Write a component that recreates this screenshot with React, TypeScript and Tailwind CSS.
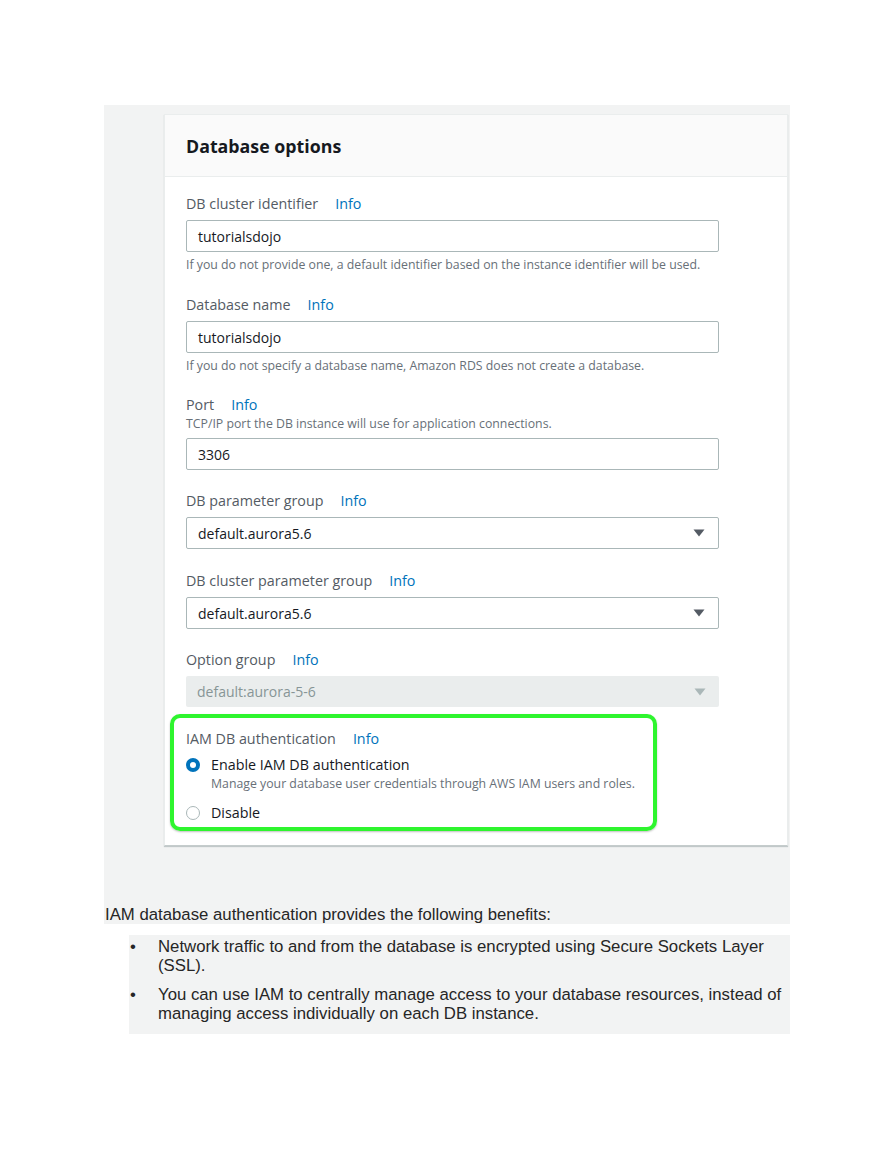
import React from 'react';

const font = { fontFamily: '"Open Sans", "Noto Sans", sans-serif' };
const docFont = { fontFamily: '"Liberation Sans", Arial, sans-serif' };

const Label: React.FC<{ text: string; className?: string }> = ({ text, className }) => (
  <div className={`flex items-center h-[20px] text-[14.3px] text-[#545b64] ${className ?? ''}`}>
    <span>{text}</span>
    <span className="ml-[17px] text-[#0073bb]">Info</span>
  </div>
);

const Hint: React.FC<{ text: string; className?: string }> = ({ text, className }) => (
  <div className={`h-[16px] leading-[16px] text-[12.3px] text-[#687078] ${className ?? ''}`}>{text}</div>
);

const Input: React.FC<{ value: string; className?: string }> = ({ value, className }) => (
  <div
    className={`w-[533px] h-[32px] border border-[#aab7b8] rounded-[2px] px-[11px] flex items-center text-[14px] text-[#16191f] ${className ?? ''}`}
  >
    {value}
  </div>
);

const Select: React.FC<{ value: string; disabled?: boolean; className?: string }> = ({ value, disabled, className }) => (
  <div
    className={`w-[533px] rounded-[2px] px-[11px] flex items-center justify-between text-[14px] ${
      disabled ? 'h-[31px] bg-[#eaeded] text-[#879596]' : 'h-[32px] border border-[#aab7b8] text-[#16191f]'
    } ${className ?? ''}`}
  >
    <span>{value}</span>
    <svg width="12" height="8" viewBox="0 0 12 8" className="mr-[2px]">
      <path d="M0.5 0.5h11L6 7.5z" fill={disabled ? '#aab7b8' : '#545b64'} />
    </svg>
  </div>
);

const Radio: React.FC<{ checked?: boolean }> = ({ checked }) =>
  checked ? (
    <span className="w-[14px] h-[14px] rounded-full bg-[#0073bb] flex items-center justify-center shrink-0">
      <span className="w-[6px] h-[6px] rounded-full bg-white" />
    </span>
  ) : (
    <span className="w-[14px] h-[14px] rounded-full border border-[#aab7b8] bg-white shrink-0" />
  );

export default function App() {
  return (
    <div className="min-h-screen bg-white pt-[105px]" style={font}>
      <div className="ml-[104px] w-[686px] bg-[#f2f3f3] pt-[9px] pl-[60px]">
        <div className="w-[624px] bg-white border border-[#eaeded] border-b-[#c5cccc] shadow-[0_1px_1px_rgba(0,28,36,0.2)]">
          <div className="h-[62px] bg-[#fafafa] border-b border-[#eaeded] flex items-center px-[21px]">
            <h2 className="text-[17.8px] font-bold text-[#16191f] mt-[1px]">Database options</h2>
          </div>
          <div className="pl-[21px] pt-[17px] pb-[14px]">
            <Label text="DB cluster identifier" />
            <Input value="tutorialsdojo" className="mt-[6px]" />
            <Hint text="If you do not provide one, a default identifier based on the instance identifier will be used." className="mt-[5px]" />

            <Label text="Database name" className="mt-[22px]" />
            <Input value="tutorialsdojo" className="mt-[6px]" />
            <Hint text="If you do not specify a database name, Amazon RDS does not create a database." className="mt-[5px]" />

            <Label text="Port" className="mt-[21px]" />
            <Hint text="TCP/IP port the DB instance will use for application connections." className="mt-[1px]" />
            <Input value="3306" className="mt-[6px]" />

            <Label text="DB parameter group" className="mt-[21px]" />
            <Select value="default.aurora5.6" className="mt-[6px]" />

            <Label text="DB cluster parameter group" className="mt-[22px]" />
            <Select value="default.aurora5.6" className="mt-[6px]" />

            <Label text="Option group" className="mt-[21px]" />
            <Select value="default:aurora-5-6" disabled className="mt-[6px]" />

            <div className="mt-[7px] ml-[-16px] w-[487px] border-[4px] border-[#2ef52e] rounded-[10px] pl-[12px] pt-[11px] pb-[4px] shadow-[0_1px_2px_rgba(0,0,0,0.25)]">
              <Label text="IAM DB authentication" />
              <div className="mt-[6px] flex items-center h-[20px] gap-[11px] text-[14.3px] text-[#16191f]">
                <Radio checked />
                <span>Enable IAM DB authentication</span>
              </div>
              <div className="mt-[1px] pl-[25px] h-[16px] leading-[16px] text-[12.3px] text-[#687078]">
                Manage your database user credentials through AWS IAM users and roles.
              </div>
              <div className="mt-[11px] flex items-center h-[20px] gap-[11px] text-[14.3px] text-[#16191f]">
                <Radio />
                <span>Disable</span>
              </div>
            </div>
          </div>
        </div>
        <div className="h-[59px]" />
        <p className="ml-[-59px] text-[16.75px] leading-[19px] text-[#262626]" style={docFont}>
          IAM database authentication provides the following benefits:
        </p>
      </div>
      <ul
        className="mt-[11px] ml-[129px] w-[661px] bg-[#f2f3f3] pt-[2px] pb-[11px] text-[16.75px] leading-[19px] text-[#262626]"
        style={docFont}
      >
        <li className="flex pr-[4px]">
          <span className="w-[29px] shrink-0 pl-[1px]">•</span>
          <span>Network traffic to and from the database is encrypted using Secure Sockets Layer (SSL).</span>
        </li>
        <li className="flex mt-[10px] pr-[4px]">
          <span className="w-[29px] shrink-0 pl-[1px]">•</span>
          <span>
            You can use IAM to centrally manage access to your database resources, instead of managing access individually on each DB instance.
          </span>
        </li>
      </ul>
    </div>
  );
}
